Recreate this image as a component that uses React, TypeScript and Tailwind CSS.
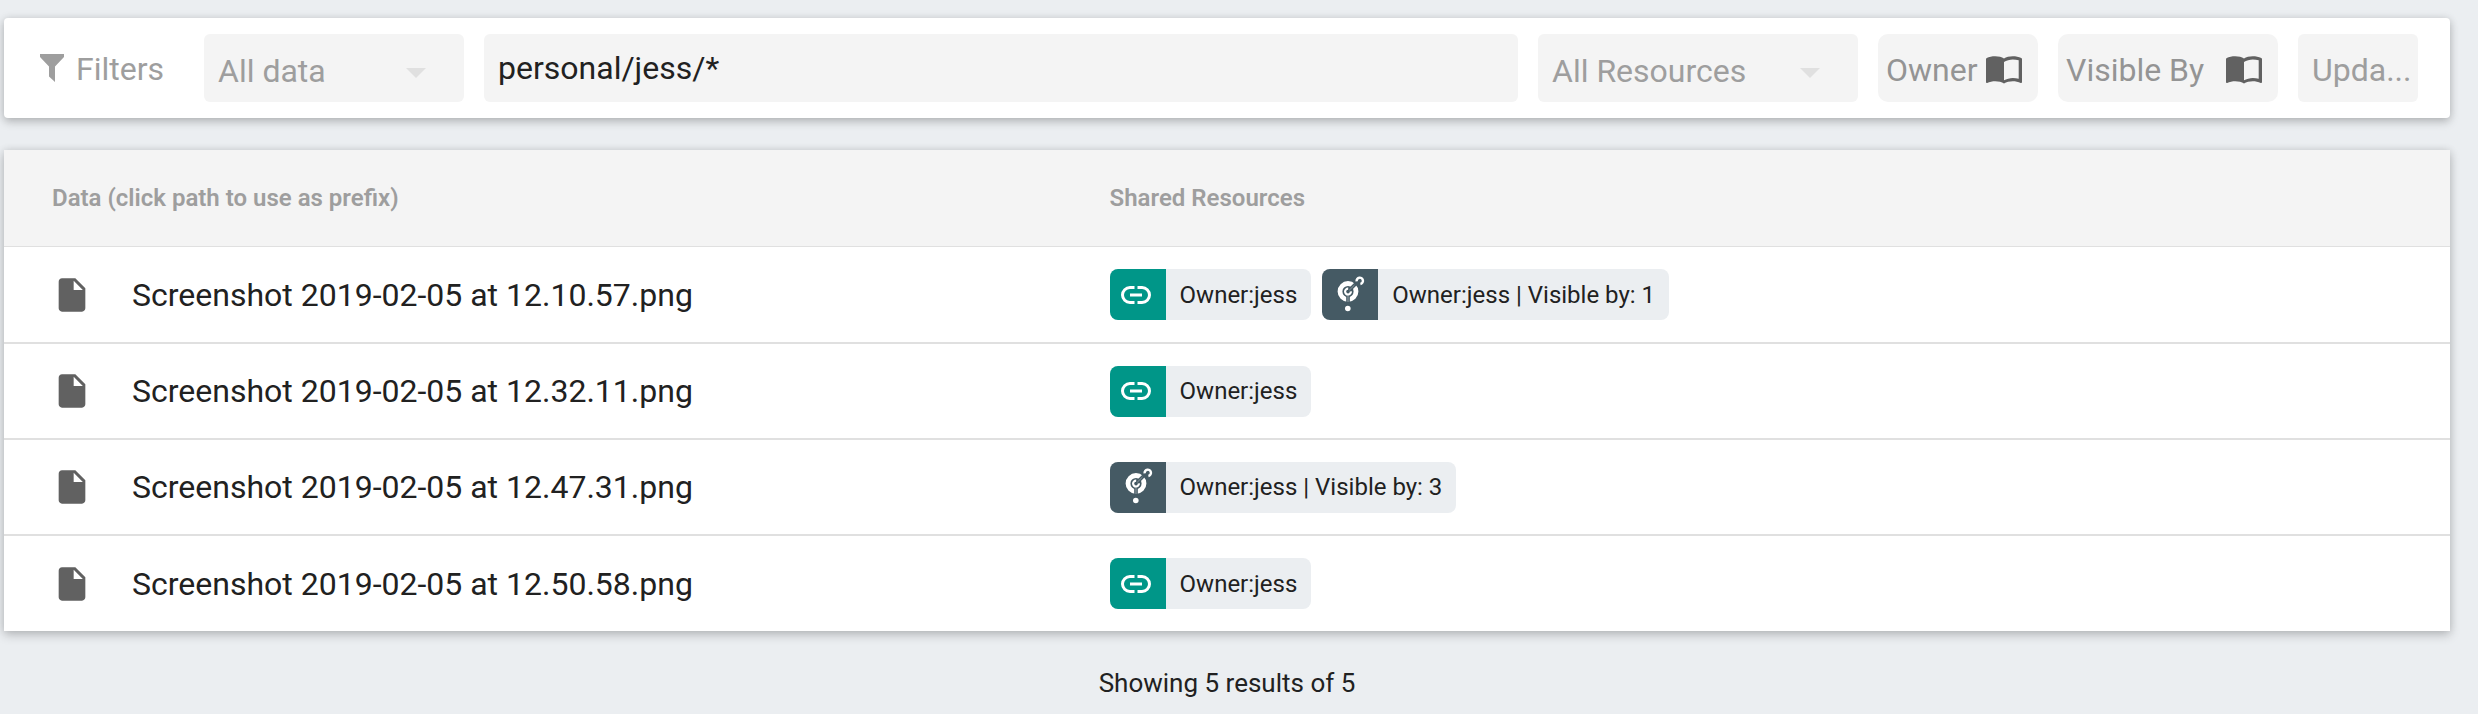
import React, { useState } from "react";

type Kind = "link" | "app";
interface Resource {
  kind: Kind;
  label: string;
}
interface Row {
  name: string;
  resources: Resource[];
}

const rows: Row[] = [
  {
    name: "Screenshot 2019-02-05 at 12.10.57.png",
    resources: [
      { kind: "link", label: "Owner:jess" },
      { kind: "app", label: "Owner:jess | Visible by: 1" },
    ],
  },
  { name: "Screenshot 2019-02-05 at 12.32.11.png", resources: [{ kind: "link", label: "Owner:jess" }] },
  { name: "Screenshot 2019-02-05 at 12.47.31.png", resources: [{ kind: "app", label: "Owner:jess | Visible by: 3" }] },
  { name: "Screenshot 2019-02-05 at 12.50.58.png", resources: [{ kind: "link", label: "Owner:jess" }] },
];

const cardShadow = "shadow-[0_4px_10px_rgba(0,0,0,0.2),0_0_8px_rgba(0,0,0,0.1)]";

function FunnelIcon() {
  return (
    <svg className="h-7 w-6 shrink-0" viewBox="0 0 24 28" fill="currentColor" aria-hidden="true">
      <path d="M0 0H24V3L15 12.5V28L9 22.5V12.5L0 3Z" />
    </svg>
  );
}

function BookIcon() {
  return (
    <svg className="h-7 w-9 shrink-0 text-[#616161]" viewBox="0 0 36 28" fill="currentColor" aria-hidden="true">
      <path d="M18 2.5C15.8.9 12.6.2 9.2.2 6.1.2 2.9.8.8 1.9.3 2.2 0 2.6 0 3.1V26.2C0 26.9.7 27.2 1.2 26.9 3.4 25.8 6.5 25.2 9.2 25.2 12.5 25.2 15.8 25.9 18 27.5 20.2 26.1 24 25.2 26.8 25.2 29.5 25.2 32.3 25.7 34.7 26.9 35.3 27.2 36 26.8 36 26.2V3.1C36 2.6 35.7 2.2 35.3 1.9 32.8.8 29.7.2 26.8.2 23.4.2 20.2.9 18 2.5ZM32.7 22.7C30.9 22.1 28.8 21.9 26.8 21.9 24 21.9 20.2 22.9 18 24.3V5.9C20.2 4.5 24 3.5 26.8 3.5 28.8 3.5 30.9 3.7 32.7 4.3Z" />
    </svg>
  );
}

function FileIcon() {
  return (
    <svg className="size-10 shrink-0 text-[#616161]" viewBox="0 0 24 24" fill="currentColor" aria-hidden="true">
      <path d="M6 2c-1.1 0-1.99.9-1.99 2L4 20c0 1.1.89 2 1.99 2H18c1.1 0 2-.9 2-2V8l-6-6H6zm7 7V3.5L18.5 9H13z" />
    </svg>
  );
}

function LinkIcon() {
  return (
    <svg className="h-5 w-8" viewBox="0 0 32 20" fill="none" stroke="currentColor" strokeWidth="3" aria-hidden="true">
      <path d="M14.5 2.5H10A7.5 7.5 0 0 0 10 17.5H14.5" />
      <path d="M17.5 2.5H22A7.5 7.5 0 0 1 22 17.5H17.5" />
      <path d="M10 10H22" />
    </svg>
  );
}

function AppIcon() {
  return (
    <svg className="h-9 w-8 overflow-visible" viewBox="0 0 32 36" fill="none" stroke="currentColor" aria-hidden="true">
      <circle cx="16" cy="14.5" r="8" strokeWidth="4.8" />
      <path d="M16 14.5L24.5 6" stroke="#455a64" strokeWidth="3.4" />
      <path d="M16 18V26" stroke="#455a64" strokeWidth="3.6" />
      <path d="M16 18V25" strokeWidth="0.9" opacity="0.5" />
      <path d="M16.2 11.7A2.9 2.9 0 1 0 18.9 14.4" strokeWidth="2.2" />
      <path d="M17.2 13.3L22.5 8" strokeWidth="0.8" opacity="0.45" />
      <path d="M24.6 4.3A3.2 3.2 0 1 1 28.4 7" strokeWidth="2.4" />
      <circle cx="15.8" cy="31.5" r="2.8" fill="currentColor" stroke="none" />
    </svg>
  );
}

function FilterSelect({ label, width }: { label: string; width: string }) {
  return (
    <div className={`relative h-[68px] shrink-0 rounded-md bg-[#f4f4f4] text-[#9e9e9e] ${width}`}>
      <select aria-label={label} className="h-full w-full appearance-none bg-transparent pt-1.5 pl-3.5 outline-none">
        <option>{label}</option>
      </select>
      <svg className="pointer-events-none absolute top-[34px] right-[38px] h-2.5 w-5 text-[#e0e0e0]" viewBox="0 0 20 10" fill="currentColor" aria-hidden="true">
        <path d="M0 0H20L10 10Z" />
      </svg>
    </div>
  );
}

function ResourceChip({ kind, label }: Resource) {
  return (
    <button type="button" className="flex h-[51px] overflow-hidden rounded-lg bg-[#ebeef1] text-2xl text-[#212121]">
      <span className={`flex h-full w-14 items-center justify-center pr-1 text-white ${kind === "link" ? "bg-[#009688]" : "bg-[#455a64]"}`}>
        {kind === "link" ? <LinkIcon /> : <AppIcon />}
      </span>
      <span className="flex h-full items-center px-3.5 whitespace-nowrap">{label}</span>
    </button>
  );
}

export default function App() {
  const [prefix, setPrefix] = useState("personal/jess/*");
  return (
    <div className="min-h-screen bg-[#ebeef1] pt-[18px] pr-7 pl-1 font-['Roboto',sans-serif] text-[#212121]">
      <form className={`flex h-[100px] items-center gap-5 rounded bg-white pr-8 pl-9 text-[32px] ${cardShadow}`}>
        <div className="flex w-[144px] shrink-0 items-center gap-3 text-[#9e9e9e]">
          <FunnelIcon />
          <span className="pt-0.5">Filters</span>
        </div>
        <FilterSelect label="All data" width="w-[260px]" />
        <input
          aria-label="Path prefix"
          value={prefix}
          onChange={(e) => setPrefix(e.target.value)}
          className="h-[68px] min-w-0 flex-1 rounded-md bg-[#f4f4f4] px-3.5 outline-none"
        />
        <FilterSelect label="All Resources" width="w-[320px]" />
        <button type="button" className="flex h-[68px] w-[160px] shrink-0 items-center justify-between rounded-[10px] bg-[#f4f4f4] pt-1 pr-4 pl-2 text-[#949494]">
          Owner
          <BookIcon />
        </button>
        <button type="button" className="flex h-[68px] w-[220px] shrink-0 items-center justify-between rounded-[10px] bg-[#f4f4f4] pt-1 pr-4 pl-2 text-[#949494]">
          Visible By
          <BookIcon />
        </button>
        <button type="button" className="h-[68px] w-[120px] shrink-0 rounded-md bg-[#f4f4f4] pt-1 pl-3.5 text-left text-[#9e9e9e]">
          Upda...
        </button>
      </form>

      <table className={`mt-8 w-full table-fixed border-separate border-spacing-0 bg-white text-left ${cardShadow}`}>
        <thead className="bg-[#f4f4f4] text-2xl text-[#9e9e9e]">
          <tr className="h-[97px]">
            <th className="w-[45.2%] border-b border-[#e0e0e0] pl-12 font-semibold">Data (click path to use as prefix)</th>
            <th className="border-b border-[#e0e0e0] font-semibold">Shared Resources</th>
          </tr>
        </thead>
        <tbody>
          {rows.map((row, i) => {
            const line = i < rows.length - 1 ? "border-b-2 border-[#e0e0e0]" : "";
            return (
              <tr key={row.name} className="h-24 first:h-[97px] last:h-[95px]">
                <td className={`pl-12 ${line}`}>
                  <a href="#" className="flex items-center gap-10 text-[32px]">
                    <FileIcon />
                    {row.name}
                  </a>
                </td>
                <td className={line}>
                  <div className="flex gap-[11px]">
                    {row.resources.map((r) => (
                      <ResourceChip key={r.label} {...r} />
                    ))}
                  </div>
                </td>
              </tr>
            );
          })}
        </tbody>
      </table>

      <p className="mt-[33px] text-center text-[26px]">Showing 5 results of 5</p>
    </div>
  );
}
